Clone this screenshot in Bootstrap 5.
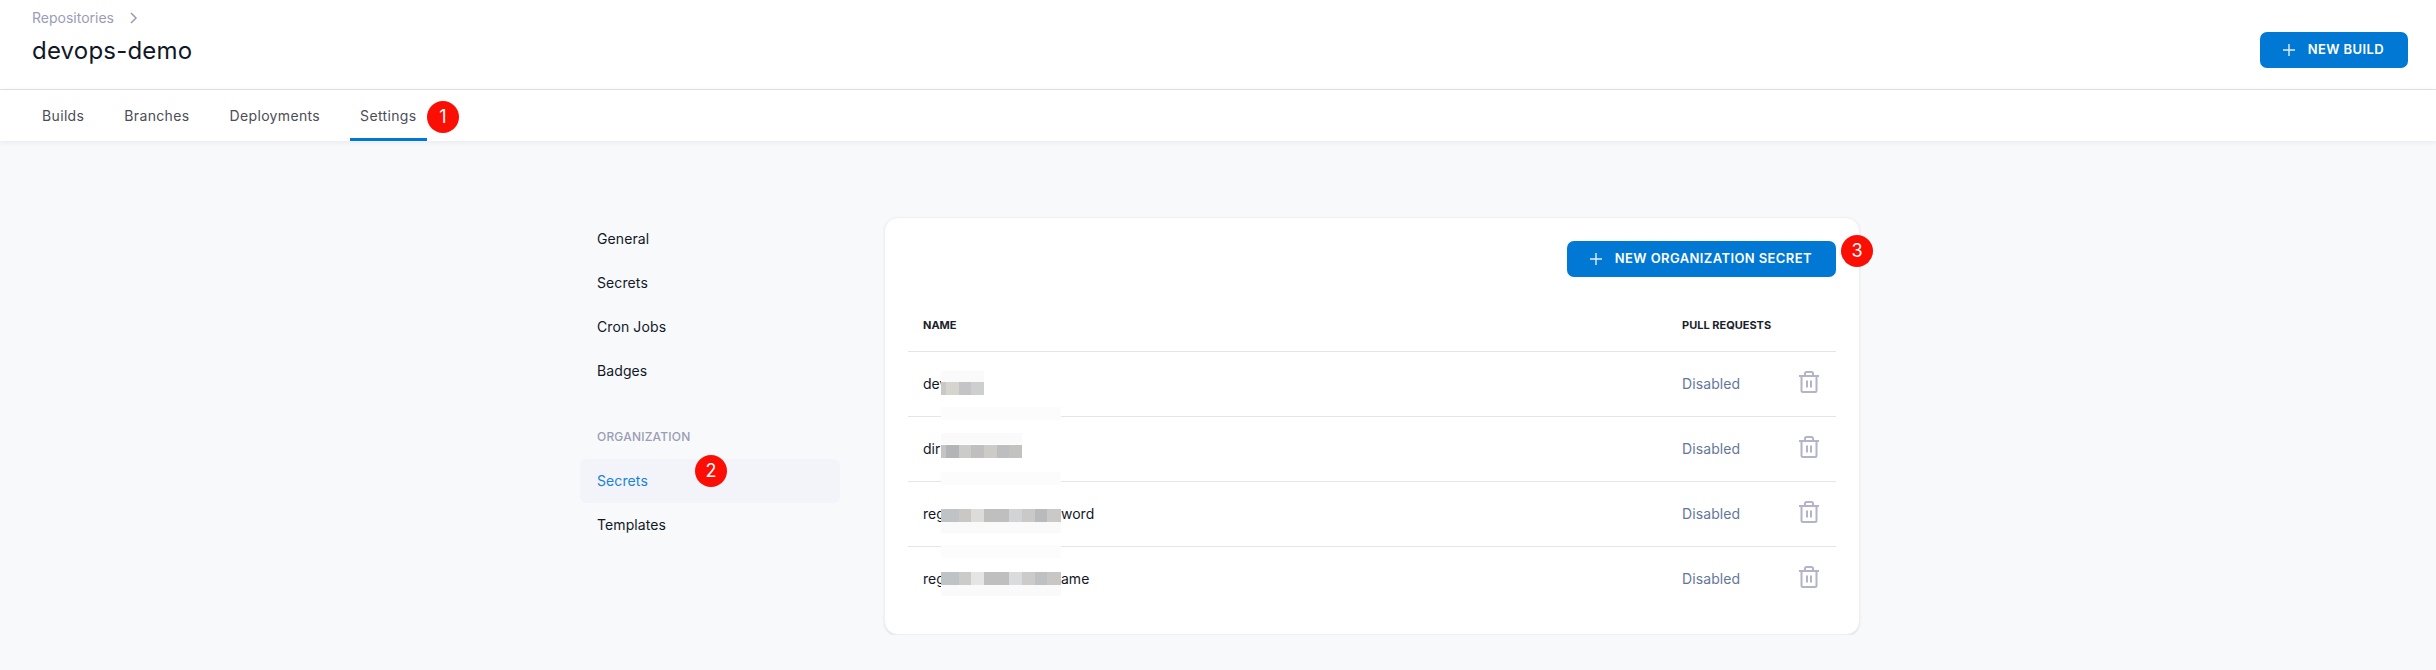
<!DOCTYPE html>
<html lang="en">
<head>
    <meta charset="UTF-8">
    <meta name="viewport" content="width=device-width, initial-scale=1.0">
    <title>devops-demo - Settings</title>
    <link href="https://cdn.jsdelivr.net/npm/bootstrap@5.3.0/dist/css/bootstrap.min.css" rel="stylesheet">
    <style>
        body {
            background-color: #f8f9fb;
            font-family: Inter, "Liberation Sans", sans-serif;
            font-size: 14px;
            color: #111827;
        }
        .page-head {
            height: 90px;
            padding: 9px 28px 0 32px;
            background: #fff;
            border-bottom: 1px solid #e3e3e6;
        }
        .crumb {
            height: 18px;
            line-height: 18px;
            color: #9a9db5;
            font-size: 14px;
        }
        .repo-title {
            margin: 9px 0 0;
            font-size: 24px;
            line-height: 30px;
            font-weight: 400;
            letter-spacing: .2px;
            color: #101828;
        }
        .btn-new {
            height: 36px;
            padding: 0 24px 0 23px;
            gap: 13px;
            background: #0078d4;
            border: 0;
            border-radius: 7px;
            color: #fff;
            font-size: 13px;
            font-weight: 600;
            letter-spacing: .4px;
            text-transform: uppercase;
            white-space: nowrap;
        }
        .btn-new:hover { background: #0078d4; color: #fff; }
        .head-btn { margin-top: 23px; }
        .tab-bar {
            height: 51px;
            padding-left: 32px;
            gap: 20px;
            background: #fff;
            box-shadow: 0 1px 6px rgba(20, 30, 60, .08);
        }
        .tab-bar .nav-link {
            height: 51px;
            padding: 0 10px;
            line-height: 51px;
            color: #4b4d57;
            font-size: 14px;
            letter-spacing: .35px;
        }
        .tab-bar .nav-link.active {
            border-bottom: 3px solid #0078d4;
            border-radius: 2px 2px 0 0;
        }
        .settings-wrap {
            width: 1280px;
            margin-left: 580px;
            padding-top: 76px;
            gap: 44px;
        }
        .side-col { width: 260px; }
        .side-link {
            display: block;
            height: 44px;
            padding: 0 17px;
            line-height: 44px;
            letter-spacing: .1px;
            color: #111827;
            border-radius: 6px;
            text-decoration: none;
        }
        .side-link.active {
            color: #1a82d9;
            background: #f3f4f9;
        }
        .side-label {
            margin-top: 32px;
            height: 34px;
            padding: 0 17px;
            line-height: 24px;
            color: #9a9db5;
            font-size: 12px;
            font-weight: 500;
            letter-spacing: .2px;
        }
        .secret-card {
            width: 976px;
            padding: 23px;
            background: #fff;
            border: 1px solid #eef0f3;
            border-radius: 14px;
            box-shadow: 0 1px 2px rgba(20, 30, 60, .1);
        }
        .table-wrap { margin-top: 24px; }
        .secret-table {
            table-layout: fixed;
            margin: 0;
            --bs-table-border-color: #e4e5e9;
        }
        .secret-table th {
            height: 50px;
            padding: 0 15px 1px;
            vertical-align: middle;
            font-size: 11px;
            font-weight: 700;
            white-space: nowrap;
            color: #1a1f2b;
        }
        .secret-table td {
            height: 65px;
            padding: 0 15px;
            vertical-align: middle;
            color: #111827;
        }
        .secret-table tr:last-child td { border-bottom: 0; }
        .secret-name { height: 64px; }
        .secret-head { width: 18px; white-space: nowrap; }
        .secret-table td.pr-state { color: #64779a; letter-spacing: .1px; }
        .col-pr { width: 117px; }
        .col-act { width: 52px; }
        .trash-icon { display: block; margin-bottom: 4px; }
        .wipe {
            position: absolute;
            left: 33px;
            width: 120px;
            height: 13px;
            background: #fcfcfc;
        }
        .wipe-a { top: 106px; }
        .wipe-b { top: 171px; }
        .wipe-c { top: 244px; }
        .step-dot {
            position: absolute;
            width: 32px;
            height: 32px;
            border-radius: 50%;
            background: #fb0f05;
            color: #fff;
            font-size: 18px;
            line-height: 32px;
            text-align: center;
        }
        .step-1 { left: 427px; top: 101px; }
        .step-2 { left: 695px; top: 455px; }
        .step-3 { left: 1841px; top: 235px; }
    </style>
</head>
<body>
    <header class="page-head d-flex justify-content-between align-items-start">
        <div>
            <div class="crumb d-flex align-items-center">
                Repositories
                <svg class="ms-3" width="8" height="12" viewBox="0 0 8 12" fill="none" stroke="#9a9db5" stroke-width="1.5"><path d="M1 1l5 5-5 5"/></svg>
            </div>
            <h1 class="repo-title">devops-demo</h1>
        </div>
        <button class="btn btn-new head-btn d-flex align-items-center">
            <svg width="12" height="12" viewBox="0 0 12 12" stroke="#e3eefa" stroke-width="1.4"><path d="M6 0v12M0 6h12"/></svg>
            New Build
        </button>
    </header>

    <nav class="nav tab-bar">
        <a class="nav-link" href="#">Builds</a>
        <a class="nav-link" href="#">Branches</a>
        <a class="nav-link" href="#">Deployments</a>
        <a class="nav-link active" href="#">Settings</a>
    </nav>

    <main class="settings-wrap d-flex align-items-start">
        <aside class="side-col">
            <a class="side-link" href="#">General</a>
            <a class="side-link" href="#">Secrets</a>
            <a class="side-link" href="#">Cron Jobs</a>
            <a class="side-link" href="#">Badges</a>
            <div class="side-label">ORGANIZATION</div>
            <a class="side-link active" href="#">Secrets</a>
            <a class="side-link" href="#">Templates</a>
        </aside>

        <section class="secret-card">
            <div class="d-flex justify-content-end">
                <button class="btn btn-new d-flex align-items-center">
                    <svg width="12" height="12" viewBox="0 0 12 12" stroke="#e3eefa" stroke-width="1.4"><path d="M6 0v12M0 6h12"/></svg>
                    New Organization Secret
                </button>
            </div>
            <div class="table-wrap position-relative">
                <table class="table secret-table">
                    <thead>
                        <tr><th>NAME</th><th class="col-pr">PULL REQUESTS</th><th class="col-act"></th></tr>
                    </thead>
                    <tbody id="secret-rows"></tbody>
                </table>
                <div class="wipe wipe-a"></div>
                <div class="wipe wipe-b"></div>
                <div class="wipe wipe-c"></div>
            </div>
        </section>
    </main>

    <div class="step-dot step-1">1</div>
    <div class="step-dot step-2">2</div>
    <div class="step-dot step-3">3</div>

    <script>
        // names are redacted in the shot, so each row has a block of mosaic cells [width, colour]
        const secrets = [
            { head: 'dev', tail: '', y: 18, shade: 7, cells: [[5,'#c8c8c8'],[13,'#d6d4cf'],[12,'#c4c4c6'],[13,'#cdcecf']] },
            { head: 'dir', tail: '', y: 16, shade: 4, cells: [[5,'#c4c4c4'],[13,'#b3b4b5'],[12,'#cbcbc9'],[13,'#bfbfbf'],[13,'#cccbc7'],[12,'#bdbebf'],[13,'#c2c2c1']] },
            { head: 'reg', tail: 'word', y: 15, shade: 28, cells: [[18,'#c0c3c5'],[12,'#cac8c5'],[13,'#dcdcda'],[25,'#c0bfbf'],[13,'#d2d3d5'],[13,'#cbc9c7'],[12,'#b9babc'],[14,'#cbc9c7']] },
            { head: 'reg', tail: 'ame', y: 13, shade: 26, cells: [[18,'#bec3c6'],[12,'#cbcbca'],[13,'#e6e5e3'],[25,'#c0bfbf'],[13,'#dadbdd'],[13,'#cdcbc9'],[12,'#bfc0c2'],[14,'#c9c6c6']] }
        ];

        const trash = `<svg class="trash-icon" width="20" height="22" viewBox="0 0 20 22" fill="none" stroke="#b3b4c8" stroke-width="2">
            <path d="M0 5h20M6 5V2.500A1.500 1.500 0 0 1 7.500 1h5A1.500 1.500 0 0 1 14 2.500V5M2.500 5v14.500A1.500 1.500 0 0 0 4 21h12a1.500 1.500 0 0 0 1.500-1.500V5M8 9.500v7M12 9.500v7"/></svg>`;

        function mosaic(s) {
            let x = 0, rects = '';
            s.cells.forEach(function(c) {
                rects += `<rect x="${x}" y="${s.y}" width="${c[0]}" height="13" fill="${c[1]}"/>`;
                rects += `<rect x="${x}" y="${s.shade}" width="${c[0]}" height="11" fill="#fafafa"/>`;
                x += c[0];
            });
            return `<svg width="${x}" height="40">${rects}</svg>`;
        }

        document.getElementById('secret-rows').innerHTML = secrets.map(function(s) {
            return `<tr>
                <td><div class="secret-name d-flex align-items-center"><span class="secret-head">${s.head}</span>${mosaic(s)}<span>${s.tail}</span></div></td>
                <td class="pr-state">Disabled</td>
                <td>${trash}</td>
            </tr>`;
        }).join('');
    </script>
    <script src="https://cdn.jsdelivr.net/npm/bootstrap@5.3.0/dist/js/bootstrap.bundle.min.js"></script>
</body>
</html>
